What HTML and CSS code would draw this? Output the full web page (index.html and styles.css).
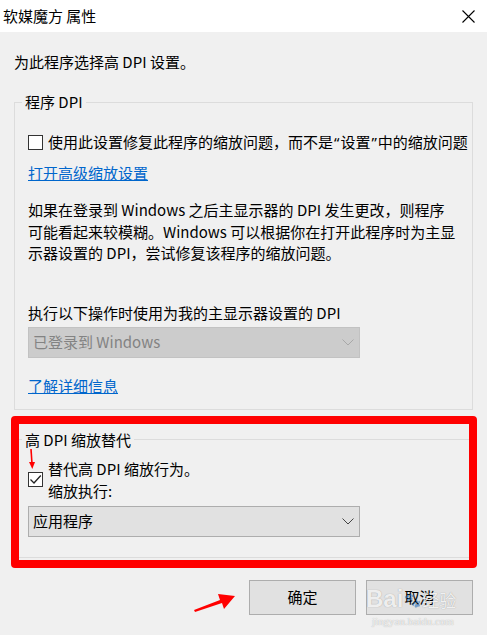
FILE: index.html
```html
<!DOCTYPE html>
<html lang="zh-CN">
<head>
<meta charset="utf-8">
<title>软媒魔方 属性</title>
<link rel="stylesheet" href="styles.css">
</head>
<body>
<div class="window">
  <div class="titlebar">
    <span class="title">软媒魔方 属性</span>
    <svg class="close" width="13" height="13" viewBox="0 0 13 13"><path d="M0.5 0.5 L12.5 12.5 M12.5 0.5 L0.5 12.5" stroke="#000" stroke-width="1.1" fill="none"/></svg>
  </div>
  <div class="content">
    <p class="intro">为此程序选择高 DPI 设置。</p>
    <fieldset class="group g1">
      <legend>程序 DPI</legend>
      <div class="check-row">
        <span class="checkbox"></span>
        <span class="check-label">使用此设置修复此程序的缩放问题，而不是<span class="q">“</span>设置<span class="q">”</span>中的缩放问题</span>
      </div>
      <a class="link link-adv" href="#">打开高级缩放设置</a>
      <p class="desc">如果在登录到 Windows 之后主显示器的 DPI 发生更改，则程序<br>可能看起来较模糊。Windows 可以根据你在打开此程序时为主显<br>示器设置的 DPI，尝试修复该程序的缩放问题。</p>
      <p class="field-label">执行以下操作时使用为我的主显示器设置的 DPI</p>
      <div class="combo disabled">
        <span>已登录到 Windows</span>
        <svg class="chev" width="12" height="7" viewBox="0 0 12 7"><path d="M0.5 0.5 L6 6 L11.5 0.5" stroke="#a8a8a8" stroke-width="1" fill="none"/></svg>
      </div>
      <a class="link link-more" href="#">了解详细信息</a>
    </fieldset>
    <fieldset class="group g2">
      <legend>高 DPI 缩放替代</legend>
      <div class="check-row two">
        <span class="checkbox checked"><svg width="13" height="13" viewBox="0 0 13 13"><path d="M1.5 6.5 L5 10 L11.8 2.5" stroke="#222" stroke-width="1.3" fill="none"/></svg></span>
        <div class="check-text">
          <div>替代高 DPI 缩放行为。</div>
          <div>缩放执行:</div>
        </div>
      </div>
      <div class="combo">
        <span>应用程序</span>
        <svg class="chev" width="12" height="7" viewBox="0 0 12 7"><path d="M0.5 0.5 L6 6 L11.5 0.5" stroke="#444" stroke-width="1" fill="none"/></svg>
      </div>
    </fieldset>
    <div class="buttons">
      <button class="btn" type="button">确定</button>
      <button class="btn" type="button">取消</button>
    </div>
  </div>

  <div class="highlight"></div>
  <svg class="arrow-small" width="10" height="24" viewBox="0 0 10 24"><path d="M4 1 L5 16" stroke="#f00" stroke-width="1.6" fill="none"/><polygon points="2,14 8,14 5.3,21" fill="#f00"/></svg>
  <svg class="arrow-big" width="46" height="24" viewBox="0 0 46 24"><polygon points="1,19 27,9 25,3 42,5 31,18 29,12 2,21" fill="#f00"/></svg>
  <div class="watermark">
    <div class="wm-main"><span class="wm-bai">Bai</span><span class="wm-paw">🐾</span><span class="wm-jy">经验</span></div>
    <div class="wm-url">jingyan.baidu.com</div>
  </div>
</div>
</body>
</html>
```

FILE: styles.css
```css
* {
  box-sizing: border-box;
}

html, body {
  margin: 0;
  padding: 0;
  background: #f0f0f0;
}

body {
  font-family: "Noto Sans CJK SC", "Noto Sans", sans-serif;
  font-size: 15px;
  color: #000;
}

.window {
  position: relative;
  width: 487px;
  height: 635px;
  background: #f0f0f0;
  overflow: hidden;
}

.titlebar {
  height: 32px;
  background: #fff;
  display: flex;
  align-items: center;
  justify-content: space-between;
  padding: 0 12px 0 3px;
}

.title {
  line-height: 20px;
  margin-top: -1px;
}

.close {
  display: block;
  margin-top: 1px;
}

.content {
  padding: 20px 14px 0 14px;
}

.intro {
  margin: 0 0 20px 0;
  line-height: 20px;
}

.group {
  margin: 0;
  min-width: 0;
  border: 1px solid #dcdcdc;
  padding: 0 12px 0 13px;
}

.group legend {
  margin-left: -6px;
  padding: 0 3px;
  line-height: 20px;
}

.g1 {
  padding-bottom: 13px;
}

.g2 {
  margin-top: 20px;
  padding-bottom: 20px;
}

.check-row {
  display: flex;
  align-items: center;
  gap: 5px;
  margin-top: 20px;
  line-height: 20px;
  white-space: nowrap;
}

.check-row.two {
  margin-top: 8px;
  line-height: 22px;
}

.q {
  font-family: "Noto Sans", sans-serif;
  margin: 0 1px;
}

.checkbox {
  width: 15px;
  height: 15px;
  border: 1px solid #333;
  background: #fff;
  flex: none;
  display: flex;
  align-items: center;
  justify-content: center;
}

.checkbox svg {
  display: block;
}

.link {
  display: block;
  width: fit-content;
  color: #0066cc;
  text-decoration: underline;
  line-height: 20px;
}

.link-adv {
  margin-top: 11px;
}

.desc {
  margin: 16px 0 0 0;
  line-height: 21.6px;
  white-space: nowrap;
}

.field-label {
  margin: 39px 0 0 0;
  line-height: 20px;
}

.combo {
  width: 332px;
  height: 31px;
  margin-top: 4px;
  display: flex;
  align-items: center;
  justify-content: space-between;
  padding: 0 5px 0 4px;
  background: #e1e1e1;
  border: 1px solid #adadad;
  line-height: 20px;
}

.combo.disabled {
  background: #cccccc;
  border-color: #c2c2c2;
  color: #838383;
}

.combo .chev {
  display: block;
}

.g2 .combo {
  margin-top: 4px;
}

.link-more {
  margin-top: 18px;
}

.buttons {
  display: flex;
  justify-content: flex-end;
  gap: 10px;
  margin-top: 22px;
}

.btn {
  width: 107px;
  height: 35px;
  background: #e1e1e1;
  border: 1px solid #adadad;
  font-family: inherit;
  font-size: 15px;
  color: #000;
  padding: 0;
  line-height: 20px;
}

/* annotations overlaid on the screenshot */
.highlight {
  position: absolute;
  left: 11px;
  top: 416px;
  width: 466px;
  height: 152px;
  border: 8px solid #ff0000;
  border-radius: 4px;
}

.arrow-small {
  position: absolute;
  left: 27px;
  top: 448px;
}

.arrow-big {
  position: absolute;
  left: 193px;
  top: 591px;
}

.watermark {
  position: absolute;
  left: 366px;
  top: 585px;
  width: 110px;
  color: rgba(255, 255, 255, 0.85);
  text-shadow: 0 0 1px rgba(0, 0, 0, 0.35);
  pointer-events: none;
}

.wm-main {
  display: flex;
  align-items: center;
  height: 28px;
}

.wm-bai {
  font-family: "Liberation Sans", sans-serif;
  font-weight: bold;
  font-size: 24px;
  letter-spacing: 0;
}

.wm-paw {
  font-size: 14px;
  opacity: 0.6;
  margin: 0 1px;
}

.wm-jy {
  font-size: 17px;
}

.wm-url {
  font-family: "Liberation Serif", serif;
  font-size: 11px;
  margin-top: 2px;
  padding-left: 6px;
  color: rgba(255, 255, 255, 0.8);
}
```
